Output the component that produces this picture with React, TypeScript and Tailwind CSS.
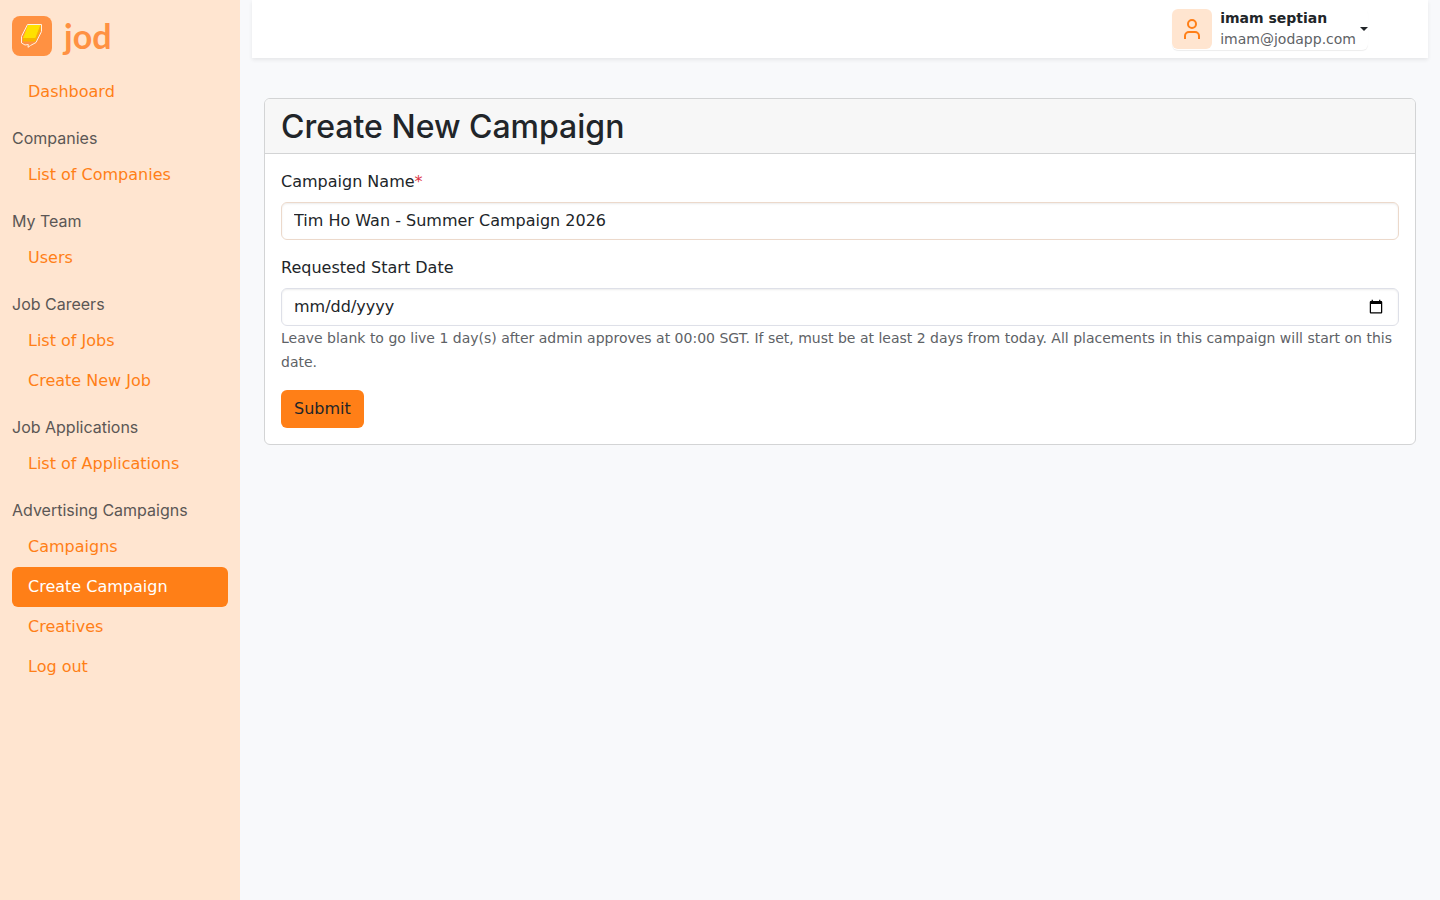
import { useState } from "react";

interface NavItem {
  label: string;
  active?: boolean;
}

interface NavGroup {
  title?: string;
  items: NavItem[];
}

const navGroups: NavGroup[] = [
  { items: [{ label: "Dashboard" }] },
  { title: "Companies", items: [{ label: "List of Companies" }] },
  { title: "My Team", items: [{ label: "Users" }] },
  {
    title: "Job Careers",
    items: [{ label: "List of Jobs" }, { label: "Create New Job" }],
  },
  { title: "Job Applications", items: [{ label: "List of Applications" }] },
  {
    title: "Advertising Campaigns",
    items: [
      { label: "Campaigns" },
      { label: "Create Campaign", active: true },
      { label: "Creatives" },
      { label: "Log out" },
    ],
  },
];

function Logo() {
  return (
    <a href="#" className="flex items-center gap-3 text-[#ff9142]">
      <svg width="40" height="40" viewBox="0 0 40 40" aria-hidden="true">
        <rect width="40" height="40" rx="8" fill="#ff9142" />
        <path
          d="M15.500 8.500h14v7l-5.500 11-5.500 3-2.500 1.800.3-2.800-3.300.5-3.500-2v-6.500z"
          fill="#ff9142"
          stroke="#fff1df"
          strokeWidth="1"
          strokeLinejoin="round"
        />
        <path d="M16 9h12.500l-5 13h-12.500z" fill="#ffe100" />
        <path d="M11 22h12.500l5-13v5l-5 11.500h-12.500z" fill="#f7b500" />
      </svg>
      <span className="font-[Lato,sans-serif] text-[34px] leading-10 font-bold">jod</span>
    </a>
  );
}

function Sidebar() {
  return (
    <aside className="w-60 shrink-0 bg-[#ffe5d0] px-3 pt-4">
      <Logo />
      <nav className="mt-4">
        {navGroups.map((group, i) => (
          <div key={i} className="mb-4">
            {group.title && (
              <h2 className="mb-1.5 font-[Inter,sans-serif] text-base leading-[21px] text-[#5b5755]">
                {group.title}
              </h2>
            )}
            <ul>
              {group.items.map((item) => (
                <li key={item.label}>
                  <a
                    href="#"
                    className={
                      item.active
                        ? "block rounded-md bg-[#ff7f17] px-4 py-2 text-white"
                        : "block rounded-md px-4 py-2 text-[#ff7f17]"
                    }
                  >
                    {item.label}
                  </a>
                </li>
              ))}
            </ul>
          </div>
        ))}
      </nav>
    </aside>
  );
}

function Topbar() {
  return (
    <header className="mx-3 flex justify-end bg-white px-15 py-2 shadow-[0_2px_4px_rgba(0,0,0,0.075)]">
      <button
        type="button"
        className="flex items-center rounded-md text-left text-sm shadow-[0_1px_1px_rgba(0,0,0,0.075)]"
      >
        <span className="mr-2 flex size-10 items-center justify-center rounded-md bg-[#ffe5d0]">
          <svg
            width="24"
            height="24"
            viewBox="0 0 24 24"
            fill="none"
            stroke="#ff7f17"
            strokeWidth="2"
            aria-hidden="true"
          >
            <circle cx="12" cy="7" r="4" />
            <path d="M5 22v-3a4 4 0 0 1 4-4h6a4 4 0 0 1 4 4v3" />
          </svg>
        </span>
        <span className="flex flex-col leading-[21px]">
          <span className="font-bold">imam septian</span>
          <span className="text-[#5e6266]">imam@jodapp.com</span>
        </span>
        <span className="ml-1 border-x-4 border-t-4 border-x-transparent border-t-[#212529]" />
      </button>
    </header>
  );
}

export default function App() {
  const [name, setName] = useState("Tim Ho Wan - Summer Campaign 2026");
  const [startDate, setStartDate] = useState("");

  return (
    <div className="flex min-h-screen bg-[#f8f9fb] font-['DejaVu_Sans',sans-serif] text-base text-[#212529]">
      <Sidebar />

      <div className="min-w-0 flex-1">
        <Topbar />

        <main className="px-6 pt-10">
          <section className="overflow-hidden rounded-md border border-[#d3d4d5] bg-white">
            <div className="border-b border-[#d3d4d5] bg-[#f7f7f7] px-4 pt-2 pb-1.5">
              <h1 className="font-[Inter,sans-serif] text-[32px] leading-10 font-medium">
                Create New Campaign
              </h1>
            </div>

            <form className="p-4" onSubmit={(e) => e.preventDefault()}>
              <div className="mb-4">
                <label htmlFor="name" className="mb-2 block">
                  Campaign Name<span className="text-[#dc3545]">*</span>
                </label>
                <input
                  id="name"
                  type="text"
                  value={name}
                  onChange={(e) => setName(e.target.value)}
                  className="block w-full rounded-md border border-[#ecd9cb] bg-white px-3 py-1.5 leading-6 shadow-[inset_0_1px_2px_rgba(0,0,0,0.075)] outline-none"
                />
              </div>

              <div className="mb-4">
                <label htmlFor="start-date" className="mb-2 block">
                  Requested Start Date
                </label>
                <input
                  id="start-date"
                  type="date"
                  value={startDate}
                  onChange={(e) => setStartDate(e.target.value)}
                  className="block h-[38px] w-full rounded-md border border-[#dee0e8] bg-white px-3 shadow-[inset_0_1px_2px_rgba(0,0,0,0.075)] outline-none [&::-webkit-datetime-edit-day-field]:p-0 [&::-webkit-datetime-edit-month-field]:p-0 [&::-webkit-datetime-edit-year-field]:p-0"
                />
                <p className="text-sm leading-6 text-[#5e6266]">
                  Leave blank to go live 1 day(s) after admin approves at 00:00
                  SGT. If set, must be at least 2 days from today. All
                  placements in this campaign will start on this date.
                </p>
              </div>

              <button
                type="submit"
                className="block rounded-md bg-[#ff7f17] px-[13px] py-[7px]"
              >
                Submit
              </button>
            </form>
          </section>
        </main>
      </div>
    </div>
  );
}
